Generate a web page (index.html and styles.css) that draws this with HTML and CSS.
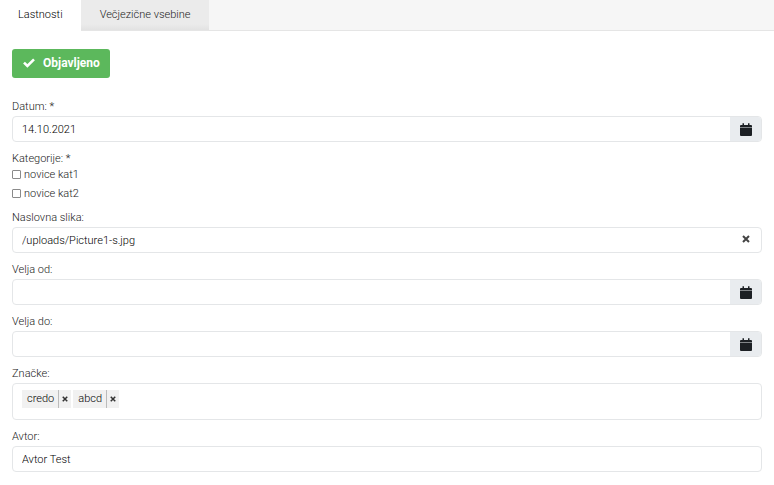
FILE: index.html
```html
<!DOCTYPE html>
<html lang="sl">
<head>
    <meta charset="UTF-8">
    <meta name="viewport" content="width=device-width, initial-scale=1.0">
    <title>Lastnosti</title>
    <link rel="stylesheet" href="styles.css">
</head>
<body>
    <svg class="icon-defs" aria-hidden="true">
        <symbol id="icon-calendar" viewBox="0 0 12 13">
            <path d="M0 4V3Q0 2 1 2H2.5V0.3H4V2H8V0.3H9.5V2H11Q12 2 12 3V4Z"/>
            <path d="M0 4H12V5H0Z" opacity="0.5"/>
            <path d="M0 5H12V12Q12 13 11 13H1Q0 13 0 12Z"/>
        </symbol>
    </svg>

    <nav class="tabs">
        <a href="#lastnosti" class="tab active">Lastnosti</a>
        <a href="#vsebine" class="tab">Večjezične vsebine</a>
    </nav>

    <form class="form" id="lastnosti">
        <button type="button" class="publish-button">
            <svg class="check-icon" viewBox="0 0 12 10" aria-hidden="true"><path d="M1 4.6L4.4 8L11 1.4"/></svg>
            Objavljeno
        </button>

        <div class="field">
            <label for="datum">Datum: *</label>
            <div class="input-group">
                <input type="text" id="datum" value="14.10.2021">
                <button type="button" class="addon" aria-label="Izberi datum"><svg class="calendar-icon"><use href="#icon-calendar"/></svg></button>
            </div>
        </div>

        <fieldset class="categories">
            <legend>Kategorije: *</legend>
            <label class="check"><input type="checkbox" name="kat1">novice kat1</label>
            <label class="check"><input type="checkbox" name="kat2">novice kat2</label>
        </fieldset>

        <div class="field">
            <label for="slika">Naslovna slika:</label>
            <div class="input-group">
                <input type="text" id="slika" value="/uploads/Picture1-s.jpg">
                <button type="button" class="clear-button" aria-label="Odstrani sliko"><svg class="clear-icon" viewBox="0 0 8 8"><path d="M1 1L7 7M7 1L1 7"/></svg></button>
            </div>
        </div>

        <div class="field">
            <label for="velja-od">Velja od:</label>
            <div class="input-group">
                <input type="text" id="velja-od">
                <button type="button" class="addon" aria-label="Izberi datum"><svg class="calendar-icon"><use href="#icon-calendar"/></svg></button>
            </div>
        </div>

        <div class="field">
            <label for="velja-do">Velja do:</label>
            <div class="input-group">
                <input type="text" id="velja-do">
                <button type="button" class="addon" aria-label="Izberi datum"><svg class="calendar-icon"><use href="#icon-calendar"/></svg></button>
            </div>
        </div>

        <div class="field">
            <label for="znacke">Značke:</label>
            <div class="input-group tags">
                <span class="tag">credo<button type="button" class="tag-remove" aria-label="Odstrani credo"><svg class="remove-icon" viewBox="0 0 8 8"><path d="M1 1L7 7M7 1L1 7"/></svg></button></span>
                <span class="tag">abcd<button type="button" class="tag-remove" aria-label="Odstrani abcd"><svg class="remove-icon" viewBox="0 0 8 8"><path d="M1 1L7 7M7 1L1 7"/></svg></button></span>
                <input type="text" id="znacke">
            </div>
        </div>

        <div class="field">
            <label for="avtor">Avtor:</label>
            <div class="input-group">
                <input type="text" id="avtor" value="Avtor Test">
            </div>
        </div>
    </form>
</body>
</html>
```
FILE: styles.css
```css
* {
    box-sizing: border-box;
}

body {
    margin: 0;
    font-family: Roboto, Arial, sans-serif;
    font-size: 11px;
    font-weight: 300;
    line-height: 16px;
    color: #222;
    background-color: #fff;
}

button,
input {
    font-family: inherit;
    font-size: inherit;
    font-weight: inherit;
    line-height: inherit;
}

button {
    border: none;
    cursor: pointer;
}

.icon-defs {
    display: none;
}

/* Tabs */
.tabs {
    display: flex;
    background-color: #f6f6f6;
    border-bottom: 1px solid #e5e5e5;
}

.tab {
    padding: 7px 18px 7px 19px;
    color: #222;
    background: linear-gradient(#ebebeb 80%, #e2e2e2);
    text-decoration: none;
}

.tab.active {
    margin-bottom: -1px;
    padding-left: 18px;
    color: #000;
    background: #fff;
}

/* Form */
.form {
    padding: 18px 12px 12px;
}

.publish-button {
    display: flex;
    align-items: center;
    gap: 8px;
    height: 29px;
    margin-bottom: 20px;
    padding: 0 10px 1px 11px;
    color: #fff;
    background-color: #5cb85c;
    border-radius: 3px;
    font-size: 12px;
    font-weight: bold;
}

.check-icon {
    width: 12px;
    height: 10px;
    fill: none;
    stroke: #fff;
    stroke-width: 2.6;
}

.field {
    margin-bottom: 8px;
}

.field > label {
    display: block;
    padding-top: 1px;
    margin-bottom: 1px;
}

.input-group {
    display: flex;
    height: 26px;
    border: 1px solid #e4e6e8;
    border-radius: 4px;
    overflow: hidden;
}

.input-group input {
    flex: 1;
    min-width: 0;
    padding: 1px 9px 0;
    color: #000;
    background: none;
    border: none;
    outline: none;
}

.addon,
.clear-button {
    display: flex;
    align-items: center;
    justify-content: center;
    width: 31px;
    padding: 0;
    background: none;
}

.addon {
    background-color: #e9ecef;
}

.calendar-icon {
    width: 12px;
    height: 13px;
    fill: #1c2024;
}

.clear-button {
    padding-bottom: 3px;
}

.clear-icon {
    width: 8px;
    height: 8px;
    stroke: #444;
    stroke-width: 2;
}

/* Categories */
.categories {
    margin: 0 0 5px;
    padding: 0;
    border: none;
}

.categories legend {
    padding: 1px 0 0;
}

.check {
    display: flex;
    align-items: flex-start;
    gap: 3px;
    padding-bottom: 3px;
}

.check:last-child {
    padding-bottom: 2px;
}

.check input {
    appearance: none;
    width: 9px;
    height: 9px;
    margin: 3px 0 0;
    background-color: #fff;
    border: 1px solid #8a8a8a;
    border-radius: 1px;
}

.check input:checked {
    background-color: #5cb85c;
}

/* Tags */
.tags {
    align-items: flex-start;
    gap: 2px;
    height: auto;
    min-height: 37px;
    padding: 6px 9px 5px;
}

.tag {
    display: flex;
    height: 18px;
    padding-left: 5px;
    color: #000;
    background-color: #f1f1f1;
    line-height: 18px;
}

.tag-remove {
    display: flex;
    align-items: center;
    justify-content: center;
    width: 13px;
    margin-left: 4px;
    padding: 0;
    background: none;
    border-left: 1px solid #bbb;
}

.remove-icon {
    width: 6px;
    height: 6px;
    stroke: #333;
    stroke-width: 2;
}
```
